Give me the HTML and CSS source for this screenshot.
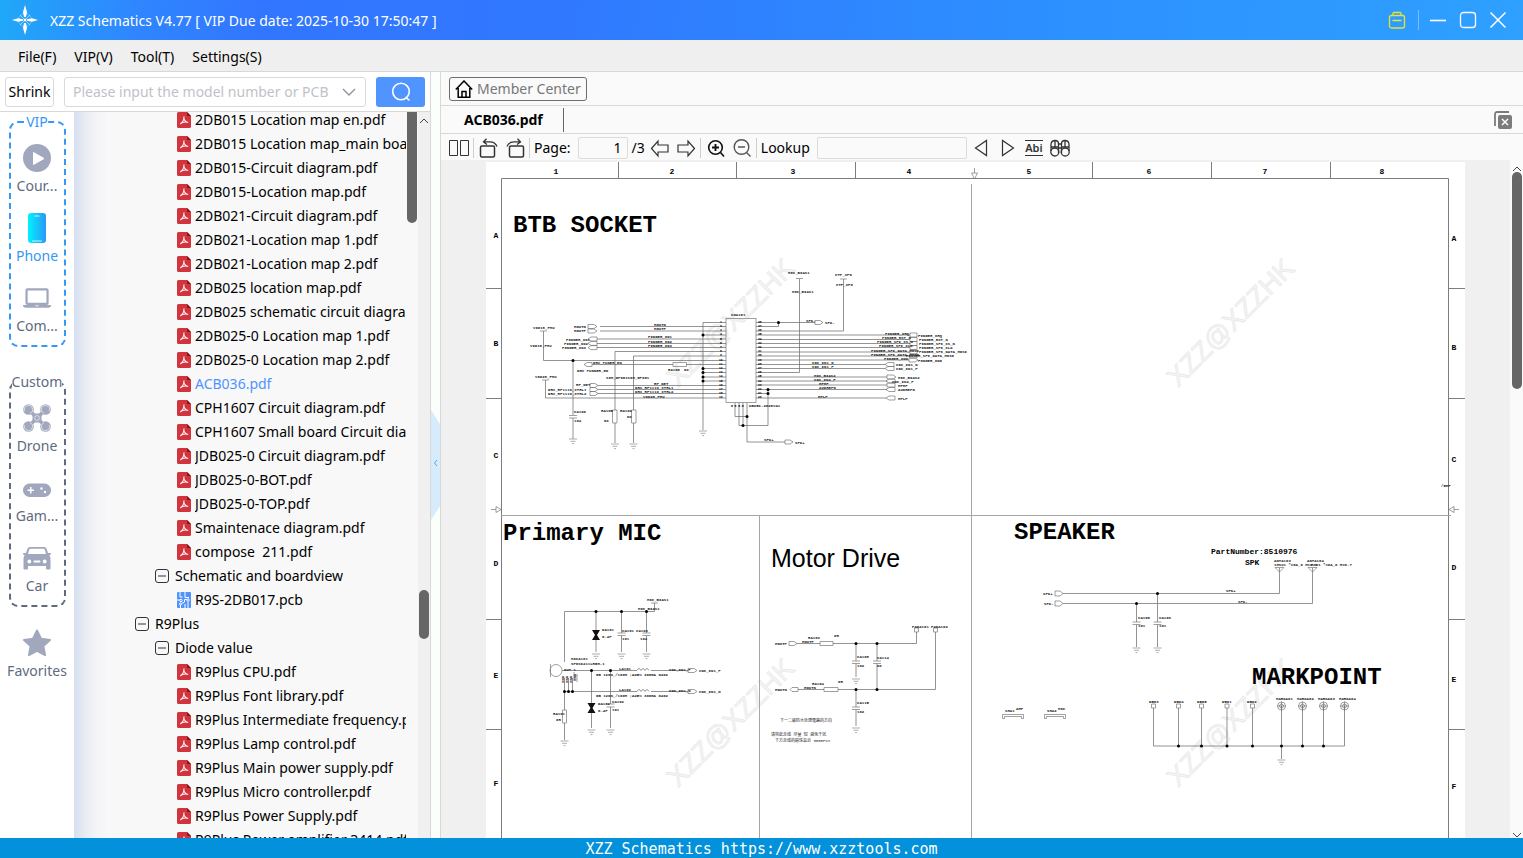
FILE: index.html
```html
<!DOCTYPE html>
<html lang="en">
<head>
<meta charset="utf-8">
<title>XZZ Schematics</title>
<link rel="stylesheet" href="styles.css">
</head>
<body>
<svg class="defs" aria-hidden="true">
  <symbol id="pdf" viewBox="0 0 14 16"><path d="M1.500 0H10l4 4v10.500a1.500 1.500 0 0 1-1.500 1.500h-11A1.500 1.500 0 0 1 0 14.500v-13A1.500 1.500 0 0 1 1.500 0z" fill="#d2343e"/><path d="M10 0l4 4h-3a1 1 0 0 1-1-1z" fill="#8f1119"/><path d="M6.800 4.500c.7 2.500.4 4.200-3.500 7.500M6.900 6.500c.4 2 1.600 3.400 4.300 4M4 11.300c2-1.300 4-1.700 7-1" fill="none" stroke="#fff" stroke-width="1.100"/></symbol>
  <symbol id="pcb" viewBox="0 0 14 16"><rect width="14" height="16" rx="1" fill="#4f93ff"/><path d="M3 0v5h2.500M8 0v5.500h4M0 8h3M11 7.500H7.500V10L5 11.500M3.500 16v-3M8 16v-4M11 16V9.500" fill="none" stroke="#fff"/><circle cx="4" cy="8.500" r="1.200" fill="none" stroke="#fff"/><circle cx="11" cy="8" r="1.200" fill="#4f93ff" stroke="#fff"/><circle cx="3.500" cy="12" r="1" fill="none" stroke="#fff"/></symbol>
  <symbol id="minus" viewBox="0 0 14 14"><rect x=".5" y=".5" width="13" height="13" rx="2.500" fill="none" stroke="#333"/><path d="M3 7h8" stroke="#333"/></symbol>
  <symbol id="gnd" viewBox="-5 -1 10 8" overflow="visible"><path d="M-4 0H4M-2.500 2.300H2.500M-1 4.600H1" fill="none" stroke="#777" stroke-width=".6"/></symbol>
</svg>

<header class="titlebar">
  <svg class="logo" viewBox="0 0 26 30"><circle cx="13" cy="15" r="6.500" fill="none" stroke="#9fd4ff" stroke-width=".8" opacity=".7"/><path d="M13 0l2 7-1 5h-2l-1-5zM13 30l2-7-1-5h-2l-1 5zM0 15l6-1.800 5 1v1.600l-5 1zM26 15l-6-1.800-5 1v1.600l5 1z" fill="#fff"/><path d="M8 10l10 10M18 10L8 20" stroke="#cfe9ff" stroke-width=".7"/><circle cx="13" cy="15" r="1.400" fill="#fff"/></svg>
  <h1>XZZ Schematics V4.77 [ VIP Due date: 2025-10-30 17:50:47 ]</h1>
  <div class="winbtns">
    <button aria-label="License"><svg viewBox="0 0 18 18"><g fill="none" stroke="#e6e23a" stroke-width="1.300"><rect x="1.500" y="4.500" width="15" height="12.500" rx="2"/><path d="M5 4.500V2.500A1 1 0 0 1 6 1.500h6a1 1 0 0 1 1 1v2M4.500 9.500h9" /></g></svg></button>
    <i class="vbar"></i>
    <button aria-label="Minimize"><svg viewBox="0 0 18 18"><path d="M1 9.500h16" stroke="#fff" stroke-width="1.600"/></svg></button>
    <button aria-label="Maximize"><svg viewBox="0 0 18 18"><rect x="1.500" y="1.500" width="15" height="15" rx="3" fill="none" stroke="#fff" stroke-width="1.300"/></svg></button>
    <button aria-label="Close"><svg viewBox="0 0 18 18"><path d="M1.500 1.500l15 15M16.500 1.500l-15 15" stroke="#fff" stroke-width="1.500"/></svg></button>
  </div>
</header>

<nav class="menubar">
  <button>File(F)</button><button>VIP(V)</button><button>Tool(T)</button><button>Settings(S)</button>
</nav>

<main class="workspace">
  <section class="side">
    <form class="search">
      <button type="button" class="shrink">Shrink</button>
      <div class="combo">
        <input type="text" aria-label="Model number" placeholder="Please input the model number or PCB">
        <svg viewBox="0 0 14 8"><path d="M1 1l6 6 6-6" fill="none" stroke="#8a8f99" stroke-width="1.300"/></svg>
      </div>
      <button type="button" class="go" aria-label="Search"><svg viewBox="0 0 20 20"><circle cx="10" cy="9.500" r="8.300" fill="none" stroke="#fff" stroke-width="1.600"/><path d="M14.500 15l4 3.500" stroke="#fff" stroke-width="1.600"/></svg></button>
    </form>
    <div class="panes">
      <nav class="rail">
        <fieldset class="vip">
          <legend>VIP</legend>
          <button><svg viewBox="0 0 28 28"><circle cx="14" cy="14" r="14" fill="#a1a8bd"/><path d="M10.500 8.500v12l10.500-6z" fill="#fff" stroke="#fff" stroke-linejoin="round"/></svg>Cour...</button>
          <button class="on"><svg viewBox="0 0 28 30"><defs><linearGradient id="pg"><stop stop-color="#00f2fe"/><stop offset="1" stop-color="#2a98f8"/></linearGradient></defs><rect x="5" width="18" height="30" rx="3" fill="url(#pg)"/><path d="M12 3h4M9.500 28h9" stroke="#c9f4ff" stroke-width="1.200" stroke-linecap="round"/></svg>Phone</button>
          <button><svg viewBox="0 0 30 22"><rect x="3.800" y="1.800" width="22.500" height="15.500" rx="1" fill="none" stroke="#a1a8bd" stroke-width="2.400"/><path d="M0 18.500h30a3 3 0 0 1-3 3H3a3 3 0 0 1-3-3z" fill="#a1a8bd"/><path d="M13 19.300h4" stroke="#fff" stroke-width=".8"/></svg>Com...</button>
        </fieldset>
        <fieldset>
          <legend>Custom</legend>
          <button><svg viewBox="0 0 28 28"><path d="M6 6l16 16M22 6L6 22" stroke="#a1a8bd" stroke-width="3.400"/><g fill="#a1a8bd"><circle cx="5.500" cy="5.500" r="5.300"/><circle cx="22.500" cy="5.500" r="5.300"/><circle cx="5.500" cy="22.500" r="5.300"/><circle cx="22.500" cy="22.500" r="5.300"/><rect x="9.500" y="9.500" width="9" height="9" rx="2"/></g><g fill="none" stroke="#fff" stroke-width=".6"><path d="M1.800 7A4 4 0 1 1 7 9.200M26.200 7A4 4 0 1 0 21 9.200M1.800 21A4 4 0 1 0 7 18.800M26.200 21A4 4 0 1 1 21 18.800"/><circle cx="14" cy="14" r="2.400"/></g></svg>Drone</button>
          <button><svg viewBox="0 0 28 28"><rect y="9.500" width="28" height="13.500" rx="6.700" fill="#a1a8bd"/><path d="M4.500 16.300h6.500M7.750 13v6.500" stroke="#fff" stroke-width="1.500"/><g fill="#fff"><circle cx="18.500" cy="14.500" r="1.200"/><circle cx="22" cy="18" r="1.200"/></g></svg>Gam...</button>
          <button><svg viewBox="0 0 28 24"><path fill-rule="evenodd" fill="#a1a8bd" d="M7 1h14q2 0 2.700 2L25 7h2.500q.5 0 .5.700T27 9h-.7Q27.500 10.500 27.500 13v9.500a1 1 0 0 1-1 1H24a1 1 0 0 1-1-1V20H5v2.500a1 1 0 0 1-1 1H1.500a1 1 0 0 1-1-1V13q0-2.500 1.200-4H1Q0 8.500 0 7.700T.5 7H3l1.300-4Q5 1 7 1zM7.500 2.800Q6.500 2.800 6 4.200L5 8h18l-1-3.800q-.5-1.400-1.500-1.400z"/><g fill="#fff"><circle cx="6.300" cy="15.500" r="1.900"/><circle cx="21.700" cy="15.500" r="1.900"/><rect x="10.500" y="14.500" width="7" height="2" rx="1"/></g></svg>Car</button>
        </fieldset>
        <button class="fav"><svg viewBox="0 0 28 28"><path d="M14 1.500l4 8.200 9 1.200-6.600 6.200 1.700 9L14 21.800 5.900 26.100l1.700-9L1 10.900l9-1.200z" fill="#a1a8bd" stroke="#a1a8bd" stroke-width="2" stroke-linejoin="round"/></svg>Favorites</button>
      </nav>
      <div class="tree">
        <ul>
          <li><svg><use href="#pdf"/></svg><span>2DB015 Location map en.pdf</span></li>
          <li><svg><use href="#pdf"/></svg><span>2DB015 Location map_main board.pdf</span></li>
          <li><svg><use href="#pdf"/></svg><span>2DB015-Circuit diagram.pdf</span></li>
          <li><svg><use href="#pdf"/></svg><span>2DB015-Location map.pdf</span></li>
          <li><svg><use href="#pdf"/></svg><span>2DB021-Circuit diagram.pdf</span></li>
          <li><svg><use href="#pdf"/></svg><span>2DB021-Location map 1.pdf</span></li>
          <li><svg><use href="#pdf"/></svg><span>2DB021-Location map 2.pdf</span></li>
          <li><svg><use href="#pdf"/></svg><span>2DB025 location map.pdf</span></li>
          <li><svg><use href="#pdf"/></svg><span>2DB025 schematic circuit diagram.pdf</span></li>
          <li><svg><use href="#pdf"/></svg><span>2DB025-0 Location map 1.pdf</span></li>
          <li><svg><use href="#pdf"/></svg><span>2DB025-0 Location map 2.pdf</span></li>
          <li class="sel"><svg><use href="#pdf"/></svg><span>ACB036.pdf</span></li>
          <li><svg><use href="#pdf"/></svg><span>CPH1607 Circuit diagram.pdf</span></li>
          <li><svg><use href="#pdf"/></svg><span>CPH1607 Small board Circuit diagram.pdf</span></li>
          <li><svg><use href="#pdf"/></svg><span>JDB025-0 Circuit diagram.pdf</span></li>
          <li><svg><use href="#pdf"/></svg><span>JDB025-0-BOT.pdf</span></li>
          <li><svg><use href="#pdf"/></svg><span>JDB025-0-TOP.pdf</span></li>
          <li><svg><use href="#pdf"/></svg><span>Smaintenace diagram.pdf</span></li>
          <li><svg><use href="#pdf"/></svg><span>compose&nbsp; 211.pdf</span></li>
          <li class="l2"><svg><use href="#minus"/></svg><span>Schematic and boardview</span></li>
          <li><svg><use href="#pcb"/></svg><span>R9S-2DB017.pcb</span></li>
          <li class="l1"><svg><use href="#minus"/></svg><span>R9Plus</span></li>
          <li class="l2"><svg><use href="#minus"/></svg><span>Diode value</span></li>
          <li><svg><use href="#pdf"/></svg><span>R9Plus CPU.pdf</span></li>
          <li><svg><use href="#pdf"/></svg><span>R9Plus Font library.pdf</span></li>
          <li><svg><use href="#pdf"/></svg><span>R9Plus Intermediate frequency.pdf</span></li>
          <li><svg><use href="#pdf"/></svg><span>R9Plus Lamp control.pdf</span></li>
          <li><svg><use href="#pdf"/></svg><span>R9Plus Main power supply.pdf</span></li>
          <li><svg><use href="#pdf"/></svg><span>R9Plus Micro controller.pdf</span></li>
          <li><svg><use href="#pdf"/></svg><span>R9Plus Power Supply.pdf</span></li>
          <li><svg><use href="#pdf"/></svg><span>R9Plus Power amplifier 3414.pdf</span></li>
        </ul>
      </div>
      <div class="innerbar"><i></i></div>
      <div class="outerbar"><svg viewBox="0 0 10 6"><path d="M1 5l4-4 4 4" fill="none" stroke="#444"/></svg><i></i></div>
    </div>
  </section>
  <div class="splitter"><svg viewBox="0 0 9 110"><path d="M0 0l9 14v82l-9 14z" fill="#d6ebfc"/><path d="M6 50L3.500 53 6 56" fill="none" stroke="#5aa5e8"/></svg></div>

  <section class="viewer">
    <div class="member"><a href="#member"><svg viewBox="0 0 18 18"><path d="M.8 9.500L9 1l8.200 8.500M3.200 8v9.200h11.600V8M7 17v-5.500h4V17" fill="none" stroke="#000" stroke-width="1.500"/></svg>Member Center</a></div>
    <div class="tabs"><button class="tab">ACB036.pdf</button><button class="closeall" aria-label="Close all tabs"><svg viewBox="0 0 18 18"><path d="M1 15V3a2 2 0 0 1 2-2h12" fill="none" stroke="#7b7b7b" stroke-width="1.800"/><rect x="4" y="4" width="14" height="14" rx="2" fill="#7b7b7b"/><path d="M8 8l6 6M14 8l-6 6" stroke="#fff" stroke-width="1.500"/></svg></button></div>
    <div class="tools">
      <button aria-label="Two pages"><svg viewBox="0 0 20 18"><path d="M.5 1.500h8v15h-8zM11.500 1.500h8v15h-8z" fill="none" stroke="#333"/></svg></button>
      <i></i>
      <button aria-label="Rotate left"><svg viewBox="0 0 20 20"><rect x="1.500" y="8" width="14" height="11" rx="1.500" fill="none" stroke="#333" stroke-width="1.500"/><path d="M7.500.8L4.500 4l3.500 2.500M5 3.800h6q5 0 7 4.700" fill="none" stroke="#333" stroke-width="1.300"/></svg></button>
      <button aria-label="Rotate right"><svg viewBox="0 0 20 20"><rect x="4.500" y="8" width="14" height="11" rx="1.500" fill="none" stroke="#333" stroke-width="1.500"/><path d="M12.500.8l3 3.200L12 6.500M15 3.800H9q-5 0-7 4.700" fill="none" stroke="#333" stroke-width="1.300"/></svg></button>
      <i></i>
      <label for="pg-no">Page:</label><input id="pg-no" class="num" type="text" value="1"><span>/3</span>
      <button aria-label="Previous page"><svg viewBox="0 0 20 20"><path d="M1.500 10.500l6.500-7.500v4h10v7H8v4z" fill="none" stroke="#333" stroke-width="1.200"/></svg></button>
      <button aria-label="Next page"><svg viewBox="0 0 20 20"><path d="M18.500 10.500L12 3v4H2v7h10v4z" fill="none" stroke="#333" stroke-width="1.200"/></svg></button>
      <i></i>
      <button aria-label="Zoom in"><svg viewBox="0 0 20 20"><g fill="none" stroke="#111" stroke-width="1.600"><circle cx="9.500" cy="9.500" r="6.800"/><path d="M14.500 14.500l3.500 4"/></g><path d="M6 9.500h7M9.500 6v7" stroke="#111" stroke-width="1.900"/></svg></button>
      <button aria-label="Zoom out"><svg viewBox="0 0 20 20"><g fill="none" stroke="#555" stroke-width="1.400"><circle cx="9.500" cy="9" r="7.300"/><path d="M14.500 14.500l4 4M6 9h7"/></g></svg></button>
      <i></i>
      <label for="find">Lookup</label><input id="find" class="find" type="text">
      <button aria-label="Find previous"><svg viewBox="0 0 20 20"><path d="M14.500 2.500v15l-11-7.500z" fill="none" stroke="#333" stroke-width="1.200"/></svg></button>
      <button aria-label="Find next"><svg viewBox="0 0 20 20"><path d="M4.500 2.500v15l11-7.500z" fill="none" stroke="#333" stroke-width="1.200"/></svg></button>
      <button class="abi">Abi</button>
      <button aria-label="Search text"><svg viewBox="0 0 20 20"><g fill="none" stroke="#333" stroke-width="1.300"><circle cx="4.800" cy="14" r="4"/><circle cx="15.200" cy="14" r="4"/><path d="M1 13V6q.5-3.500 4-3.500T8.500 6v9M19 13V6q-.5-3.500-4-3.500T11.500 6v9M8.500 6h3M8.500 10h3M1 9h7.500M11.500 9H19M5 2.500V9M15 2.500V9"/></g></svg></button>
    </div>
    <div class="canvas">
      <div class="paper">
      <svg class="sheet" viewBox="486 162 979 676" preserveAspectRatio="xMidYMin slice">
        <g class="wm">
          <text transform="translate(737 329) rotate(-45)">XZZ@XZZHK</text>
          <text transform="translate(1237 329) rotate(-45)">XZZ@XZZHK</text>
          <text transform="translate(737 729) rotate(-45)">XZZ@XZZHK</text>
          <text transform="translate(1237 729) rotate(-45)">XZZ@XZZHK</text>
        </g>
        <path class="frame" d="M501.500 838V178.500H1448.500V838M618.500 162v16M736.500 162v16M855.500 162v16M1092.500 162v16M1211.500 162v16M1330.500 162v16M486 288.500h15M486 398.500h15M486 619.500h15M486 729.500h15M1449 288.500h16M1449 398.500h16M1449 619.500h16M1449 729.500h16"/>
        <path class="split" d="M501 515.500h950M971.500 184v654M759.500 516v322"/>
        <path class="part" d="M974.500 168v5M971.500 173h6l-3 6zM491 509.500h5M496 506.500v6l5-3zM1459 509.500h-5M1454 506.500v6l-5-3z"/>
        <g class="ax">
          <text x="556" y="174">1</text><text x="672" y="174">2</text><text x="793" y="174">3</text><text x="909" y="174">4</text><text x="1029" y="174">5</text><text x="1149" y="174">6</text><text x="1265" y="174">7</text><text x="1382" y="174">8</text>
          <text x="496" y="238">A</text><text x="496" y="346">B</text><text x="496" y="458">C</text><text x="496" y="566">D</text><text x="496" y="678">E</text><text x="496" y="786">F</text>
          <text x="1454" y="241">A</text><text x="1454" y="350">B</text><text x="1454" y="462">C</text><text x="1454" y="570">D</text><text x="1454" y="682">E</text><text x="1454" y="789">F</text>
        </g>
        <g class="head">
          <text x="513" y="232">BTB SOCKET</text><text x="503" y="540">Primary MIC</text><text x="1014" y="539">SPEAKER</text><text x="1252" y="684">MARKPOINT</text>
        </g>
        <text class="motor" x="771" y="567">Motor Drive</text>
        <g class="mid"><text x="1211" y="554">PartNumber:8510976</text><text x="1245" y="565">SPK</text></g>

        <!-- BTB connector -->
        <g class="part">
          <rect x="726" y="318.500" width="30" height="84"/>
          <path d="M588 324.500h6l3 2-3 2h-6zM588 329h6l3 2-3 2h-6zM597 337h-6l-3 2 3 2h6zM597 341.400h-6l-3 2 3 2h6zM597 345.600h-6l-3 2 3 2h6zM592 362.500h-5l-3 2 3 2h5zM590 383.500h5l3 2-3 2h-5zM590 387.500h5l3 2-3 2h-5zM590 391.500h5l3 2-3 2h-5zM673 362.500h13.500v4H673zM612.500 410h4.500v13h-4.500zM631.500 410h4.500v13h-4.500z"/>
          <path d="M540 331h7M542 380h7M569 415.500h8M569 418h8M796 278.500h7M840 279h7"/>
          <path d="M815 320.500h5l3 2-3 2h-5zM785 440h5l3 2-3 2h-5zM917 333h-7v4h7zM917 337.500h-7v4h7zM917 341.500h-7v4h7zM917 345.500h-7v4h7zM917 350h-7v4h7zM917 354h-7v4h7zM909 358h6l3 2-3 2h-6zM894 362.500h-6l-3 2 3 2h6zM894 366.500h-6l-3 2 3 2h6zM887 375h6l3 2-3 2h-6zM895 379h-6l-3 2 3 2h6zM887 383h8v4h-8zM895 387.500h-6l-3 2 3 2h6zM895 396h-6l-3 2 3 2h6z"/>
        </g>
        <path class="wire" d="M726 322.500H703V430M600 326.500H726M600 331H726M703 335H726M597 339H726M597 343.500H726M597 347.500H726M726 351.500H615V410M615 423V443M726 356H633.500V410M633.500 423V443M543.500 331V360.500H726M592 364.500H673M686 364.500H726M703 368.500h23M703 372.500h23M703 377h23M703 381h23M598 385.500H726M598 389.500H726M598 393.500H726M545.500 380V398H726M573 360V415M573 418V439M735 403V416.500H747M739 403V425.500H768V389.500M743 403V425.500M747 403V442H785"/>
        <path class="wire" d="M756 322.500H815M756 326.500H778.500V322.500M756 331H843.500V279M756 335H910M756 339.500H910M756 343.500H910M756 347.500H910M756 352H910M756 356H910M756 360H909M756 364.500H885M756 368.500H885M756 372.500H799.500V279M756 377H887M756 381H887M756 385H887M756 389.500H887M756 393.500H768M756 398H886"/>
        <use href="#gnd" x="698" y="430" width="10" height="8"/><use href="#gnd" x="610" y="443" width="10" height="8"/><use href="#gnd" x="628.500" y="443" width="10" height="8"/><use href="#gnd" x="568" y="438" width="10" height="8"/>
        <g class="dots"><circle cx="703" cy="335" r="1.500"/><circle cx="703" cy="368.500" r="1.500"/><circle cx="703" cy="372.500" r="1.500"/><circle cx="703" cy="377" r="1.500"/><circle cx="703" cy="381" r="1.500"/><circle cx="573" cy="360.500" r="1.500"/><circle cx="747" cy="416.500" r="1.500"/><circle cx="743" cy="425.500" r="1.500"/><circle cx="768" cy="389.500" r="1.500"/><circle cx="768" cy="393.500" r="1.500"/><circle cx="778.500" cy="322.500" r="1.500"/></g>
        <g class="tiny">
          <text x="731" y="316">CNA101</text><text x="533" y="329">VIO18_PMU</text><text x="530" y="347">VIO18_PMU</text><text x="535" y="378">VIO28_PMU</text>
          <text x="574" y="328">HOUTN</text><text x="574" y="332">HOUTP</text><text x="566" y="341">FINGER_ID1</text><text x="564" y="345">FINGER_ID2</text><text x="562" y="349">FINGER_ID3</text>
          <text x="654" y="326">HOUTN</text><text x="654" y="330">HOUTP</text><text x="648" y="338">FINGER_ID1</text><text x="648" y="343">FINGER_ID2</text><text x="648" y="347">FINGER_ID3</text>
          <text x="593" y="364">DRX_TUNER_EN</text><text x="577" y="372">DRX TUNNER_EN</text><text x="668" y="371">RA106</text><text x="684" y="371">NC</text><text x="606" y="379">SIM_GPIO1SIM_GPIO1</text>
          <text x="576" y="386">RF_DET</text><text x="548" y="391">DRX_RF1119_CTRL1</text><text x="548" y="395">DRX_RF1119_CTRL2</text>
          <text x="654" y="385">RF_DET</text><text x="635" y="389">DRX_RF1119_CTRL1</text><text x="635" y="393">DRX_RF1119_CTRL2</text><text x="643" y="398">VIO28_PMU</text>
          <text x="574" y="413">CA100</text><text x="574" y="422">104</text><text x="601" y="412">RA105</text><text x="604" y="422">NC</text><text x="620" y="412">RA102</text><text x="627" y="418">NC</text>
          <text x="749" y="407">WB25C-2020VA1</text><text x="764" y="441">SPK+</text><text x="795" y="444">SPK+</text>
          <text x="788" y="274">MIC_BIAS1</text><text x="792" y="293">MIC_BIAS1</text><text x="835" y="276">CTP_3P0</text><text x="836" y="286">CTP_3P0</text><text x="806" y="322">SPK-</text><text x="825" y="324">SPK-</text>
          <text x="885" y="335">FINGER_IRQ</text><text x="882" y="339">FINGER_RST_N</text><text x="877" y="343">FINGER_SPI_CS_N</text><text x="879" y="347">FINGER_SPI_CLK</text><text x="871" y="352">FINGER_SPI_DATA_MOSI</text><text x="871" y="356">FINGER_SPI_DATA_MISO</text><text x="884" y="360">FINGER_IDO</text>
          <text x="918" y="337">FINGER_IRQ</text><text x="919" y="341">FINGER_RST_N</text><text x="919" y="345">FINGER_SPI_CS_N</text><text x="919" y="349">FINGER_SPI_CLK</text><text x="919" y="353">FINGER_SPI_DATA_MOSI</text><text x="906" y="357">FINGER_SPI_DATA_MISO</text><text x="918" y="362">FINGER_IDO</text>
          <text x="812" y="364">CDC_IN1_N</text><text x="812" y="368">CDC_IN1_P</text><text x="896" y="366">CDC_IN1_N</text><text x="896" y="370">CDC_IN1_P</text>
          <text x="814" y="377">MIC_BIAS2</text><text x="814" y="381">CDC_IN2_P</text><text x="819" y="385">HPHP</text><text x="819" y="389">AUDREFN</text><text x="818" y="398">HPLP</text>
          <text x="898" y="379">MIC_BIAS2</text><text x="892" y="383">CDC_IN2_P</text><text x="898" y="387">HPHP</text><text x="898" y="391">AUDREFN</text><text x="898" y="400">HPLP</text>
          <text x="1441" y="487">/BHF</text>
        </g>
        <g class="pins">
          <text x="720" y="323">1</text><text x="720" y="327">2</text><text x="720" y="331">3</text><text x="720" y="335">4</text><text x="720" y="340">5</text><text x="720" y="344">6</text><text x="720" y="348">7</text><text x="720" y="352">8</text><text x="720" y="356">9</text><text x="719" y="361">10</text><text x="719" y="365">11</text><text x="719" y="369">12</text><text x="719" y="373">13</text><text x="719" y="377">14</text><text x="719" y="382">15</text><text x="719" y="386">16</text><text x="719" y="390">17</text><text x="719" y="394">18</text><text x="719" y="398">19</text>
          <text x="758" y="323">38</text><text x="758" y="327">37</text><text x="758" y="331">36</text><text x="758" y="335">35</text><text x="758" y="340">34</text><text x="758" y="344">33</text><text x="758" y="348">32</text><text x="758" y="352">31</text><text x="758" y="356">30</text><text x="758" y="361">29</text><text x="758" y="365">28</text><text x="758" y="369">27</text><text x="758" y="373">26</text><text x="758" y="377">25</text><text x="758" y="382">24</text><text x="758" y="386">23</text><text x="758" y="390">22</text><text x="758" y="394">21</text><text x="758" y="398">20</text>
          <text x="731" y="407">G G G G</text>
        </g>

        <!-- Primary microphone -->
        <path class="wire" d="M654.500 603V611.500H564.500V662M596 611.500V652M621.500 611.500V633M621.500 635.500V652M646.500 611.500V633M646.500 635.500V652M562 670.500H637M651 670.500H688M564.500 691.500H637M651 691.500H688M564.500 678V710M564.500 723V740M568.500 678v13M572.500 678v13M591.500 670.500V728M610.500 670.500V704M610.500 707V728"/>
        <g class="part">
          <circle cx="556" cy="670.500" r="6"/><path d="M550.500 664v13M651 603h7M617.500 633h8M617.500 635.500h8M642.500 633h8M642.500 635.500h8M606.500 704h8M606.500 707h8M562.500 710h4v13h-4zM688 668.500h6l3 2-3 2h-6zM688 689.500h6l3 2-3 2h-6z"/>
          <path d="M637 670.500q2-4 4 0q2-4 4 0q2-4 4 0M637 691.500q2-4 4 0q2-4 4 0q2-4 4 0M577 674v8M574 672v9"/>
        </g>
        <path class="solid" d="M592 630h8l-3 5 3 5h-8l3-5zM587.500 703h8l-3 5 3 5h-8l3-5z"/>
        <use href="#gnd" x="591" y="653" width="10" height="8"/><use href="#gnd" x="616.500" y="653" width="10" height="8"/><use href="#gnd" x="641.500" y="653" width="10" height="8"/><use href="#gnd" x="586.500" y="729" width="10" height="8"/><use href="#gnd" x="605.500" y="729" width="10" height="8"/><use href="#gnd" x="559.500" y="740" width="10" height="8"/>
        <g class="dots"><circle cx="596" cy="611.500" r="1.500"/><circle cx="621.500" cy="611.500" r="1.500"/><circle cx="646.500" cy="611.500" r="1.500"/><circle cx="591.500" cy="670.500" r="1.500"/><circle cx="610.500" cy="670.500" r="1.500"/><circle cx="564.500" cy="691.500" r="1.500"/><circle cx="568.500" cy="691.500" r="1.500"/><circle cx="572.500" cy="691.500" r="1.500"/></g>
        <g class="tiny">
          <text x="647" y="601">MIC_BIAS1</text><text x="638" y="610">MIC_BIAS1</text><text x="602" y="631">DA101</text><text x="602" y="638">0.4P</text><text x="622" y="632">CA101</text><text x="622" y="640">101</text><text x="636" y="632">CA103</text><text x="640" y="640">104</text>
          <text x="571" y="660">MICA101</text><text x="571" y="665">SP0S6411LR5H-1</text><text x="564" y="671">OUT 1</text>
          <text x="619" y="670">LA101</text><text x="596" y="676">GB 120Ω_/100M ;Δ25% 300mA 0402</text><text x="669" y="671">CDC_IN1_P</text><text x="699" y="672">CDC_IN1_P</text>
          <text x="619" y="691">LA102</text><text x="596" y="697">GB 120Ω_/100M ;Δ25% 300mA 0402</text><text x="669" y="692">CDC_IN1_N</text><text x="699" y="693">CDC_IN1_N</text>
          <text x="598" y="705">DA102</text><text x="598" y="712">0.4P</text><text x="612" y="703">CA102</text><text x="612" y="711">101</text><text x="553" y="715">RA101</text><text x="556" y="721">0R</text>
          <text transform="translate(564 683) rotate(-90)">GND</text><text transform="translate(568 683) rotate(-90)">GND</text><text transform="translate(572 683) rotate(-90)">GND</text><text transform="translate(576 681) rotate(-90)">GND</text>
        </g>

        <!-- Motor driver -->
        <path class="wire" d="M797 643.500H820M833 643.500H916.500V632M798 689.500H824M838 689.500H935.500V632M856 643.500V661M856 663.500V677M877 643.500V661M877 663.500V689.500M856 689.500V707M856 709.500V726"/>
        <path class="part" d="M789 641.500h5l3 2-3 2h-5zM798 687.500h-6l-2 2 2 2h6zM820 641.500h13v4h-13zM824 687.500h14v4h-14zM914.500 628h4v4h-4zM933.500 628h4v4h-4zM852 661h8M852 663.500h8M873 661h8M873 663.500h8M852 707h8M852 709.500h8"/>
        <use href="#gnd" x="851" y="678" width="10" height="8"/><use href="#gnd" x="851" y="727" width="10" height="8"/>
        <g class="dots"><circle cx="856" cy="643.500" r="1.500"/><circle cx="877" cy="643.500" r="1.500"/><circle cx="856" cy="689.500" r="1.500"/><circle cx="877" cy="689.500" r="1.500"/></g>
        <g class="tiny">
          <text x="775" y="645">HOUTP</text><text x="802" y="643">HOUTP</text><text x="808" y="639">RA103</text><text x="834" y="637">0R</text><text x="775" y="691">HOUTN</text><text x="804" y="689">HOUTN</text><text x="812" y="685">RA104</text><text x="838" y="683">0R</text>
          <text x="912" y="628">PADA101</text><text x="931" y="628">PADA102</text><text x="857" y="658">CA108</text><text x="857" y="667">102</text><text x="877" y="659">CA114</text><text x="877" y="667">NC</text><text x="857" y="704">CA115</text><text x="857" y="713">102</text>
        </g>
        <g class="note">
          <text x="780" y="722">下一二級防水处理電路的方向</text><text x="771" y="736">请将此走线 尽量 短 避免干扰</text><text x="775" y="742">下方走线的磁珠靠近 3000PCS</text>
        </g>

        <!-- Speaker -->
        <path class="wire" d="M1063 593.500H1279.500V568M1063 603.500H1312.500V568M1157.500 593.500V622M1157.500 624.500V647M1136.500 603.500V622M1136.500 624.500V647"/>
        <path class="part" d="M1055 591h5l3 2.500-3 2.500h-5zM1055 601h5l3 2.500-3 2.500h-5zM1275 567.500h9l-4.500 4.500zM1308 567.500h9l-4.500 4.500zM1132.500 622h8M1132.500 624.500h8M1153.500 622h8M1153.500 624.500h8"/>
        <use href="#gnd" x="1131.500" y="647" width="10" height="8"/><use href="#gnd" x="1152.500" y="647" width="10" height="8"/>
        <g class="tiny">
          <text x="1043" y="595">SPK+</text><text x="1044" y="605">SPK-</text><text x="1226" y="592">SPK+</text><text x="1238" y="603">SPK-</text><text x="1138" y="619">CA108</text><text x="1138" y="627">101</text><text x="1159" y="619">CA109</text><text x="1159" y="627">101</text>
          <text x="1274" y="562">ANTA103</text><text x="1307" y="562">ANTA104</text><text x="1274" y="566">1HSU1 *=0A_0 H=0.7</text><text x="1311" y="566">HSU1 *=0A_0 H=0.7</text>
          <text x="1005" y="712">SHA1</text><text x="1016" y="710">AMP</text><text x="1047" y="712">SHA2</text><text x="1058" y="710">MIC</text>
          <text x="1149" y="703">DB03</text><text x="1174" y="703">DB04</text><text x="1197" y="703">DB05</text><text x="1222" y="703">DB01</text><text x="1247" y="703">DB02</text>
          <text x="1276" y="700">MARKA01</text><text x="1297" y="700">MARKA02</text><text x="1318" y="700">MARKA03</text><text x="1339" y="700">MARKA04</text>
        </g>
        <path class="part" d="M1002.500 718.500v-4h21v4h-2v-2h-17v2zM1044.500 718.500v-4h21v4h-2v-2h-17v2z"/>

        <!-- Mark points -->
        <path class="wire" d="M1153.500 708V746H1344.500V706M1178.500 708v38M1201.500 708v38M1227 708v38M1252.500 708v38M1281.500 706V759M1302.500 706v40M1323.500 706v40"/>
        <g class="part"><path d="M1151.500 704h4v4h-4zM1176.500 704h4v4h-4zM1199.500 704h4v4h-4zM1225 704h4v4h-4zM1250.500 704h4v4h-4z"/>
          <path d="M1277 706h9M1281.500 701.500v9M1298 706h9M1302.500 701.500v9M1319 706h9M1323.500 701.500v9M1340 706h9M1344.500 701.500v9"/>
          <circle cx="1281.500" cy="706" r="4"/><circle cx="1302.500" cy="706" r="4"/><circle cx="1323.500" cy="706" r="4"/><circle cx="1344.500" cy="706" r="4"/><circle cx="1281.500" cy="706" r="2"/><circle cx="1302.500" cy="706" r="2"/><circle cx="1323.500" cy="706" r="2"/><circle cx="1344.500" cy="706" r="2"/></g>
        <use href="#gnd" x="1276.500" y="759" width="10" height="8"/>
        <g class="dots"><circle cx="1157.500" cy="593.500" r="1.500"/><circle cx="1136.500" cy="603.500" r="1.500"/><circle cx="1178.500" cy="746" r="1.500"/><circle cx="1201.500" cy="746" r="1.500"/><circle cx="1227" cy="746" r="1.500"/><circle cx="1252.500" cy="746" r="1.500"/><circle cx="1281.500" cy="746" r="1.500"/><circle cx="1302.500" cy="746" r="1.500"/><circle cx="1323.500" cy="746" r="1.500"/></g>
      </svg>
      </div>
      <div class="scroll"><svg viewBox="0 0 10 6"><path d="M1 5l4-4 4 4" fill="none" stroke="#444"/></svg><i></i><svg viewBox="0 0 10 6"><path d="M1 1l4 4 4-4" fill="none" stroke="#444"/></svg></div>
    </div>
  </section>
</main>

<footer>XZZ Schematics https://www.xzztools.com</footer>
</body>
</html>
```
FILE: styles.css
```css
* { box-sizing: border-box; }
html, body { height: 100%; }
body {
  margin: 0;
  display: flex;
  flex-direction: column;
  overflow: hidden;
  background: #fff;
  color: #000;
  font: 14px/20px "Noto Sans", "Open Sans", sans-serif;
}
button, input { font: inherit; color: inherit; }
button { border: 0; padding: 0; background: none; }
svg { display: block; flex: none; }
.defs { position: absolute; width: 0; height: 0; }

.titlebar {
  flex: none;
  height: 40px;
  display: flex;
  align-items: center;
  padding: 0 16px 0 12px;
  background: linear-gradient(95deg, #20a8f8 0, #2f86ff 9%, #3276ff 17%, #3078ff 36%, #2d92ff 72%, #2ea0ff 100%);
  color: #fff;
}
.logo { width: 26px; height: 30px; }
.titlebar h1 { margin: 0 0 0 12px; padding-top: 2px; font-size: 14px; font-weight: 400; }
.winbtns { margin-left: auto; display: flex; align-items: center; gap: 12px; }
.winbtns svg { width: 18px; height: 18px; }
.vbar { width: 1px; height: 20px; margin-right: -2px; background: #7cbcff; }

.menubar {
  flex: none;
  height: 32px;
  display: flex;
  align-items: center;
  gap: 18px;
  padding: 2px 18px 0;
  background: #efefef;
  border-bottom: 1px solid #d8d8d8;
}

.workspace { flex: 1; min-height: 0; display: flex; }
.side { width: 431px; display: flex; flex-direction: column; border-right: 1px solid #d8d8d8; }
.search {
  flex: none;
  height: 40px;
  display: flex;
  align-items: center;
  gap: 10px;
  padding: 0 5px;
  border-bottom: 1px solid #d8d8d8;
}
.shrink { width: 49px; height: 30px; padding-top: 1px; border: 1px solid #d9d9d9; border-radius: 3px; white-space: nowrap; }
.combo {
  flex: 1;
  min-width: 0;
  height: 30px;
  display: flex;
  align-items: center;
  padding: 0 9px 0 8px;
  border: 1px solid #d9d9d9;
  border-radius: 3px;
}
.combo input { flex: 1; min-width: 0; padding: 1px 0 0; margin-right: 5px; border: 0; outline: 0; background: none; }
.combo input::placeholder { color: #bfc2c8; opacity: 1; }
.combo svg { width: 14px; height: 8px; }
.go { width: 49px; height: 30px; display: grid; place-items: center; border-radius: 3px; background: #5094ff; }
.go svg { width: 20px; height: 20px; }

.panes { flex: 1; min-height: 0; display: flex; }
.rail { width: 74px; flex: none; display: flex; flex-direction: column; align-items: center; overflow: hidden; color: #5f6a80; }
.rail fieldset {
  width: 57px;
  min-width: 0;
  margin: 0 0 25px;
  padding: 1px 0 2px;
  border: 2px dashed #5f6a80;
  border-radius: 9px;
}
.rail fieldset + .fav { margin-top: -14px; }
.rail .vip { border-color: #3498f5; }
.rail legend { margin: 0 auto; padding: 0; line-height: 20px; }
.vip legend, .rail .on { color: #3498f5; }
.rail button { width: 100%; height: 70px; display: flex; flex-direction: column; align-items: center; gap: 3px; padding-top: 10px; }
.rail button svg { width: 30px; height: 30px; padding: 1px; }
.rail .on svg { padding: 0; }

.tree { flex: 1; min-width: 0; overflow: hidden; background: linear-gradient(90deg, #d5e0f1, #e6eaf2 10px, #f2f3f6 20px, #f8f8f8 34px); }
.tree ul { margin: -4px 0 0; padding: 0; list-style: none; }
.tree li { height: 24px; display: flex; align-items: center; gap: 4px; padding-left: 103px; }
.tree li.l2 { padding-left: 81px; gap: 6px; }
.tree li.l1 { padding-left: 61px; gap: 6px; }
.tree li svg { width: 14px; height: 16px; }
.tree li span { flex: 1; min-width: 0; overflow: hidden; white-space: nowrap; }
.tree .sel { color: #4f93ff; }
.innerbar { flex: none; width: 12px; background: #f8f8f8; padding-left: 1px; }
.innerbar i { display: block; width: 10px; height: 111px; border-radius: 0 0 5px 5px; background: #666; }
.outerbar { flex: none; width: 12px; padding-top: 6px; background: #f0f0f0; display: flex; flex-direction: column; align-items: center; }
.outerbar svg { width: 10px; height: 6px; }
.outerbar i { width: 10px; height: 49px; margin-top: 466px; border-radius: 5px; background: #666; }

.splitter { width: 9px; flex: none; display: flex; align-items: center; background: #fbfffb; }
.splitter svg { width: 9px; height: 110px; margin-top: 20px; }

.viewer { flex: 1; min-width: 0; display: flex; flex-direction: column; border-left: 1px solid #d8d8d8; background: #fafafa; }
.member { flex: none; height: 34px; display: flex; align-items: center; padding: 0 8px; border-bottom: 1px solid #d8d8d8; }
.member a { height: 24px; display: flex; align-items: center; gap: 4px; padding: 0 5px; border: 1px solid #6e6e6e; border-radius: 3px; color: #777; text-decoration: none; }
.member svg { width: 18px; height: 18px; }
.tabs { flex: none; height: 28px; display: flex; align-items: center; justify-content: space-between; padding-right: 11px; border-bottom: 1px solid #d8d8d8; }
.tab { height: 24px; padding: 0 20px 0 23px; border-right: 1px solid #666; font-weight: 700; }
.closeall svg { width: 18px; height: 18px; }
.tools { flex: none; height: 26px; display: flex; align-items: center; gap: 4px; padding: 1px 7px 0; }
.tools > i { width: 1px; height: 20px; margin-left: -1px; background: #cfcfcf; }
.tools svg { width: 20px; height: 20px; }
.tools button { width: 22px; flex: none; display: grid; place-items: center; }
.tools input { height: 22px; border: 1px solid #dcdcdc; border-radius: 2px; background: #fafafa; }
.tools .num { width: 50px; margin-left: 3px; padding: 0 5px; text-align: right; }
.tools .find { width: 150px; margin-left: 3px; padding: 0 5px; }
.tools .abi { height: 16px; width: 18px; border: solid #333; border-width: 1px 0; font-size: 11px; line-height: 14px; font-weight: 600; color: #333; margin: 0 2px; }

.canvas { flex: 1; min-height: 0; display: flex; background: #f0f0f0; }
.paper { flex: 1; min-width: 0; padding: 2px 45px 0; display: flex; }
.sheet { flex: 1; min-width: 0; background: #fff; }
.scroll { flex: none; width: 13px; padding-top: 6px; background: #fafafa; display: flex; flex-direction: column; align-items: center; }
.scroll svg { width: 10px; height: 6px; }
.scroll i { width: 10px; height: 217px; border-radius: 5px; background: #666; }
.scroll svg:last-child { margin-top: auto; }

.frame { fill: none; stroke: #7d7d7d; }
.split { fill: none; stroke: #a6a6a6; }
.wire { fill: none; stroke: #666; stroke-width: 0.7; }
.part { fill: none; stroke: #777; stroke-width: 0.7; }
.solid { fill: #111; }
.dots { fill: #000; }
.ax { font: bold 8px "Liberation Mono", monospace; text-anchor: middle; }
.head { font: bold 24px "Liberation Mono", monospace; }
.motor { font: 25px "Liberation Sans", sans-serif; }
.mid { font: bold 8px "Liberation Mono", monospace; }
.tiny { font: bold 4px "Liberation Mono", monospace; fill: #222; }
.note { font: 4px "Liberation Mono", "Noto Sans CJK SC", monospace; fill: #222; }
.pins { font: bold 3px "Liberation Mono", monospace; }
.wm { font: 27px "Liberation Sans", sans-serif; fill: #f4f4f4; stroke: #e8e8e8; stroke-width: 0.6; text-anchor: middle; }

footer {
  flex: none;
  height: 20px;
  background: #0291da;
  color: #fff;
  text-align: center;
  font: 15px/22px "DejaVu Sans Mono", monospace;
}
```
